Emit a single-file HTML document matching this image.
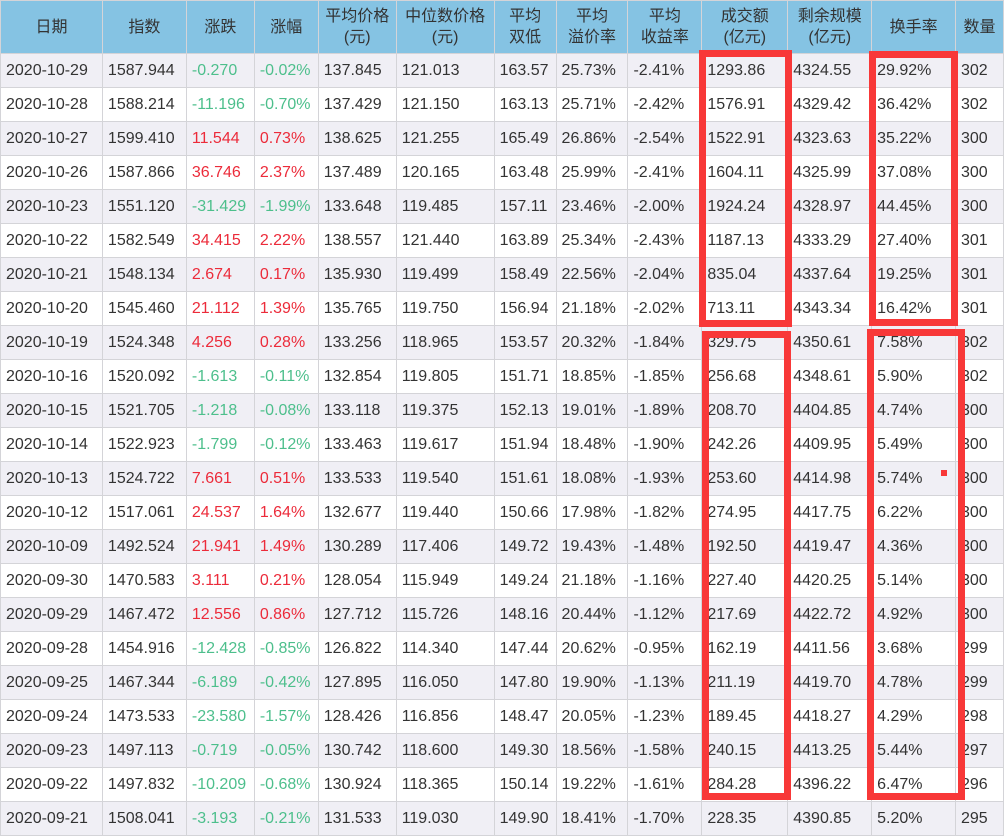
<!DOCTYPE html>
<html><head><meta charset="utf-8"><style>
body{margin:0;width:1004px;height:814px;overflow:hidden;background:#fff;font-family:"Liberation Sans","Noto Sans CJK SC",sans-serif;position:relative}
table{border-collapse:collapse;table-layout:fixed;position:absolute;left:0;top:0}
td,th{border:1px solid #d4d4d8;font-size:16px;color:#333;padding:0 0 0 5px;text-align:left;white-space:nowrap;overflow:hidden;height:33px}
th{background:#85c3e3;font-weight:normal;text-align:center;padding:0;height:52px;line-height:21px;color:#333}
tr:nth-child(even) td{background:#f0eff5}
.g{color:#4dbf8c}.r{color:#ec2b3a}
.b{position:absolute;border:7px solid #f83838;box-sizing:border-box}
</style></head><body>
<table>
<colgroup><col style="width:102px"><col style="width:84px"><col style="width:68px"><col style="width:64px"><col style="width:78px"><col style="width:98px"><col style="width:62px"><col style="width:72px"><col style="width:74px"><col style="width:86px"><col style="width:84px"><col style="width:84px"><col style="width:48px"></colgroup>
<tr><th>日期</th><th>指数</th><th>涨跌</th><th>涨幅</th><th>平均价格<br>(元)</th><th>中位数价格<br>(元)</th><th>平均<br>双低</th><th>平均<br>溢价率</th><th>平均<br>收益率</th><th>成交额<br>(亿元)</th><th>剩余规模<br>(亿元)</th><th>换手率</th><th>数量</th></tr>
<tr><td>2020-10-29</td><td>1587.944</td><td class="g">-0.270</td><td class="g">-0.02%</td><td>137.845</td><td>121.013</td><td>163.57</td><td>25.73%</td><td>-2.41%</td><td>1293.86</td><td>4324.55</td><td>29.92%</td><td>302</td></tr>
<tr><td>2020-10-28</td><td>1588.214</td><td class="g">-11.196</td><td class="g">-0.70%</td><td>137.429</td><td>121.150</td><td>163.13</td><td>25.71%</td><td>-2.42%</td><td>1576.91</td><td>4329.42</td><td>36.42%</td><td>302</td></tr>
<tr><td>2020-10-27</td><td>1599.410</td><td class="r">11.544</td><td class="r">0.73%</td><td>138.625</td><td>121.255</td><td>165.49</td><td>26.86%</td><td>-2.54%</td><td>1522.91</td><td>4323.63</td><td>35.22%</td><td>300</td></tr>
<tr><td>2020-10-26</td><td>1587.866</td><td class="r">36.746</td><td class="r">2.37%</td><td>137.489</td><td>120.165</td><td>163.48</td><td>25.99%</td><td>-2.41%</td><td>1604.11</td><td>4325.99</td><td>37.08%</td><td>300</td></tr>
<tr><td>2020-10-23</td><td>1551.120</td><td class="g">-31.429</td><td class="g">-1.99%</td><td>133.648</td><td>119.485</td><td>157.11</td><td>23.46%</td><td>-2.00%</td><td>1924.24</td><td>4328.97</td><td>44.45%</td><td>300</td></tr>
<tr><td>2020-10-22</td><td>1582.549</td><td class="r">34.415</td><td class="r">2.22%</td><td>138.557</td><td>121.440</td><td>163.89</td><td>25.34%</td><td>-2.43%</td><td>1187.13</td><td>4333.29</td><td>27.40%</td><td>301</td></tr>
<tr><td>2020-10-21</td><td>1548.134</td><td class="r">2.674</td><td class="r">0.17%</td><td>135.930</td><td>119.499</td><td>158.49</td><td>22.56%</td><td>-2.04%</td><td>835.04</td><td>4337.64</td><td>19.25%</td><td>301</td></tr>
<tr><td>2020-10-20</td><td>1545.460</td><td class="r">21.112</td><td class="r">1.39%</td><td>135.765</td><td>119.750</td><td>156.94</td><td>21.18%</td><td>-2.02%</td><td>713.11</td><td>4343.34</td><td>16.42%</td><td>301</td></tr>
<tr><td>2020-10-19</td><td>1524.348</td><td class="r">4.256</td><td class="r">0.28%</td><td>133.256</td><td>118.965</td><td>153.57</td><td>20.32%</td><td>-1.84%</td><td>329.75</td><td>4350.61</td><td>7.58%</td><td>302</td></tr>
<tr><td>2020-10-16</td><td>1520.092</td><td class="g">-1.613</td><td class="g">-0.11%</td><td>132.854</td><td>119.805</td><td>151.71</td><td>18.85%</td><td>-1.85%</td><td>256.68</td><td>4348.61</td><td>5.90%</td><td>302</td></tr>
<tr><td>2020-10-15</td><td>1521.705</td><td class="g">-1.218</td><td class="g">-0.08%</td><td>133.118</td><td>119.375</td><td>152.13</td><td>19.01%</td><td>-1.89%</td><td>208.70</td><td>4404.85</td><td>4.74%</td><td>300</td></tr>
<tr><td>2020-10-14</td><td>1522.923</td><td class="g">-1.799</td><td class="g">-0.12%</td><td>133.463</td><td>119.617</td><td>151.94</td><td>18.48%</td><td>-1.90%</td><td>242.26</td><td>4409.95</td><td>5.49%</td><td>300</td></tr>
<tr><td>2020-10-13</td><td>1524.722</td><td class="r">7.661</td><td class="r">0.51%</td><td>133.533</td><td>119.540</td><td>151.61</td><td>18.08%</td><td>-1.93%</td><td>253.60</td><td>4414.98</td><td>5.74%</td><td>300</td></tr>
<tr><td>2020-10-12</td><td>1517.061</td><td class="r">24.537</td><td class="r">1.64%</td><td>132.677</td><td>119.440</td><td>150.66</td><td>17.98%</td><td>-1.82%</td><td>274.95</td><td>4417.75</td><td>6.22%</td><td>300</td></tr>
<tr><td>2020-10-09</td><td>1492.524</td><td class="r">21.941</td><td class="r">1.49%</td><td>130.289</td><td>117.406</td><td>149.72</td><td>19.43%</td><td>-1.48%</td><td>192.50</td><td>4419.47</td><td>4.36%</td><td>300</td></tr>
<tr><td>2020-09-30</td><td>1470.583</td><td class="r">3.111</td><td class="r">0.21%</td><td>128.054</td><td>115.949</td><td>149.24</td><td>21.18%</td><td>-1.16%</td><td>227.40</td><td>4420.25</td><td>5.14%</td><td>300</td></tr>
<tr><td>2020-09-29</td><td>1467.472</td><td class="r">12.556</td><td class="r">0.86%</td><td>127.712</td><td>115.726</td><td>148.16</td><td>20.44%</td><td>-1.12%</td><td>217.69</td><td>4422.72</td><td>4.92%</td><td>300</td></tr>
<tr><td>2020-09-28</td><td>1454.916</td><td class="g">-12.428</td><td class="g">-0.85%</td><td>126.822</td><td>114.340</td><td>147.44</td><td>20.62%</td><td>-0.95%</td><td>162.19</td><td>4411.56</td><td>3.68%</td><td>299</td></tr>
<tr><td>2020-09-25</td><td>1467.344</td><td class="g">-6.189</td><td class="g">-0.42%</td><td>127.895</td><td>116.050</td><td>147.80</td><td>19.90%</td><td>-1.13%</td><td>211.19</td><td>4419.70</td><td>4.78%</td><td>299</td></tr>
<tr><td>2020-09-24</td><td>1473.533</td><td class="g">-23.580</td><td class="g">-1.57%</td><td>128.426</td><td>116.856</td><td>148.47</td><td>20.05%</td><td>-1.23%</td><td>189.45</td><td>4418.27</td><td>4.29%</td><td>298</td></tr>
<tr><td>2020-09-23</td><td>1497.113</td><td class="g">-0.719</td><td class="g">-0.05%</td><td>130.742</td><td>118.600</td><td>149.30</td><td>18.56%</td><td>-1.58%</td><td>240.15</td><td>4413.25</td><td>5.44%</td><td>297</td></tr>
<tr><td>2020-09-22</td><td>1497.832</td><td class="g">-10.209</td><td class="g">-0.68%</td><td>130.924</td><td>118.365</td><td>150.14</td><td>19.22%</td><td>-1.61%</td><td>284.28</td><td>4396.22</td><td>6.47%</td><td>296</td></tr>
<tr><td>2020-09-21</td><td>1508.041</td><td class="g">-3.193</td><td class="g">-0.21%</td><td>131.533</td><td>119.030</td><td>149.90</td><td>18.41%</td><td>-1.70%</td><td>228.35</td><td>4390.85</td><td>5.20%</td><td>295</td></tr>
</table>
<div class="b" style="left:699px;top:50px;width:93px;height:277px"></div>
<div class="b" style="left:869px;top:51px;width:89px;height:275px"></div>
<div class="b" style="left:702px;top:331px;width:89px;height:469px"></div>
<div class="b" style="left:867px;top:329px;width:98px;height:471px"></div>
<div style="position:absolute;left:941px;top:470px;width:6px;height:6px;background:#f83838"></div>
</body></html>
